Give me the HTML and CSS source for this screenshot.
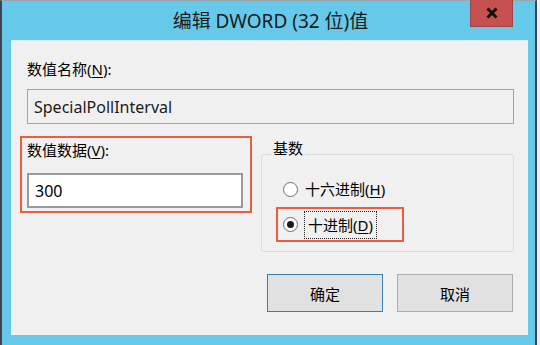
FILE: index.html
```html
<!DOCTYPE html>
<html lang="zh-CN">
<head>
  <meta charset="UTF-8">
  <title>编辑 DWORD (32 位)值</title>
  <link rel="stylesheet" href="styles.css">
</head>
<body>

<div class="window">
  <div class="titlebar">
    <span class="title">编辑 DWORD (32 位)值</span>
    <button class="close" aria-label="关闭">
      <svg width="14" height="12" viewBox="0 0 14 12">
        <path d="M2.5 1.5 L11.5 10.5 M11.5 1.5 L2.5 10.5" stroke="#111" stroke-width="3"/>
      </svg>
    </button>
  </div>

  <div class="client">
    <div class="label">数值名称(<u>N</u>):</div>
    <div class="textbox readonly">SpecialPollInterval</div>

    <div class="middle">
      <div class="mark value-box">
        <div class="label">数值数据(<u>V</u>):</div>
        <div class="textbox edit">300</div>
      </div>

      <div class="group">
        <span class="legend">基数</span>
        <div class="radio-row first">
          <span class="radio"></span>
          <span class="radio-text">十六进制(<u>H</u>)</span>
        </div>
        <div class="mark radio-row picked">
          <span class="radio checked"></span>
          <span class="radio-text focus">十进制(<u>D</u>)</span>
        </div>
      </div>
    </div>

    <div class="buttons">
      <button class="btn default">确定</button>
      <button class="btn">取消</button>
    </div>
  </div>
</div>

</body>
</html>
```

FILE: styles.css
```css
body {
  margin: 0;
  background: #f0f0f0;
  font-family: "Noto Sans", "Noto Sans CJK SC", sans-serif;
  color: #000;
}

.window {
  width: 533px;
  height: 344px;
  background: #66c9ea;
  border-left: 2px solid #3b4650;
  border-right: 2px solid #3b4650;
  border-top: 1px solid #9aa6ab;
}

.titlebar {
  height: 39px;
  position: relative;
  display: flex;
  justify-content: center;
  align-items: center;
}

.title {
  font-size: 19px;
  color: #1b1b1b;
  margin-left: 4px;
  margin-top: -1px;
}

.close {
  position: absolute;
  top: -1px;
  left: 468px;
  width: 43px;
  height: 27px;
  padding: 0;
  border: 1px solid #9c4444;
  border-top: none;
  background: #c75050;
  display: flex;
  align-items: center;
  justify-content: center;
}

.client {
  margin-left: 9px;
  width: 517px;
  height: 295px;
  box-sizing: border-box;
  padding: 18px 14px 0 16px;
  background: #f0f0f0;
  border-top: 1px solid #d9eef6;
}

.label {
  font-size: 15px;
  line-height: 20px;
}

.label u, .radio-text u {
  text-underline-offset: 2px;
}

.textbox {
  height: 35px;
  box-sizing: border-box;
  display: flex;
  align-items: center;
  padding-left: 6px;
  font-size: 16px;
}

.readonly {
  margin-top: 10px;
  border: 1px solid #a3a3a3;
  background: #f0f0f0;
  color: #1a1a1a;
}

.middle {
  display: flex;
  align-items: flex-start;
  margin-top: 12px;
  margin-left: -7px;
}

.mark {
  border: 2px solid #ef5b3c;
}

.value-box {
  width: 232px;
  height: 77px;
  box-sizing: border-box;
  padding: 2px 7px 0 5px;
}

.edit {
  margin-top: 13px;
  border: 2px solid #9a9a9a;
  background: #fff;
}

.group {
  position: relative;
  margin-top: 18px;
  margin-left: 9px;
  width: 253px;
  height: 98px;
  box-sizing: border-box;
  border: 1px solid #d6dde2;
  border-radius: 3px;
}

.legend {
  position: absolute;
  top: -17px;
  left: 9px;
  padding: 0 2px;
  background: #f0f0f0;
  font-size: 15px;
  line-height: 20px;
}

.radio-row {
  display: flex;
  align-items: center;
  font-size: 15px;
}

.first {
  height: 20px;
  margin-top: 24px;
  margin-left: 21px;
}

.picked {
  width: 128px;
  height: 35px;
  box-sizing: border-box;
  margin-top: 8px;
  margin-left: 14px;
  padding-left: 5px;
}

.radio {
  width: 13px;
  height: 13px;
  border: 1px solid #6d6d6d;
  border-radius: 50%;
  background: #fff;
  margin-right: 7px;
  display: flex;
  align-items: center;
  justify-content: center;
}

.checked::after {
  content: "";
  width: 7px;
  height: 7px;
  border-radius: 50%;
  background: #1a1a1a;
}

.radio-text {
  line-height: 20px;
}

.focus {
  outline: 1px dotted #222;
  outline-offset: 3px;
  margin-left: 3px;
}

.buttons {
  display: flex;
  justify-content: flex-end;
  gap: 14px;
  margin-top: 22px;
  margin-right: 1px;
}

.btn {
  width: 116px;
  height: 38px;
  font-family: "Noto Sans CJK SC", sans-serif;
  font-size: 15px;
  color: #000;
  background: #e1e1e1;
  border: 1px solid #adadad;
}

.btn.default {
  border-color: #3c7fb1;
}
```
